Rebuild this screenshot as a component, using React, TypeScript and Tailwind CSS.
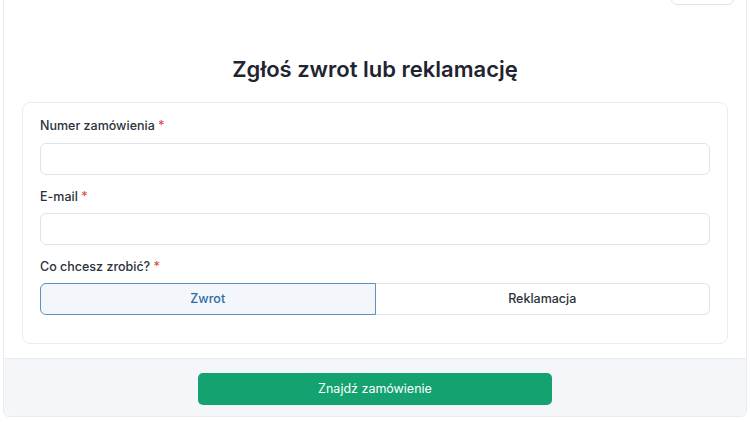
import React from "react";

export default function App() {
  const font = { fontFamily: "Inter, 'Noto Sans', sans-serif" };
  return (
    <div className="w-[750px] h-[422px] overflow-hidden bg-white" style={font}>
      <div className="ml-[3px] mr-[3px] -mt-[40px] border border-[#e8ebef] rounded-md bg-white overflow-hidden">
        <div className="flex justify-end pr-[12px] pt-[10px]">
          <div className="w-[63px] h-[34px] border border-[#dfe3e8] rounded-md bg-white" />
        </div>
        <h1 className="mt-[49px] text-center text-[22px] leading-[30px] font-semibold text-[#1f2430]">
          Zgłoś zwrot lub reklamację
        </h1>
        <div className="px-[18px] pt-[18px] pb-[14px]">
          <div className="border border-[#e9ecf0] rounded-lg px-[17px] pt-[13px] pb-[28px]">
            <label className="block text-[12.5px] leading-[20px] font-medium text-[#2b313b]">
              Numer zamówienia <span className="text-[#e5484d]">*</span>
            </label>
            <div className="mt-[7px] h-[32px] border border-[#dfe3e8] rounded-md bg-white" />
            <label className="block mt-[12px] text-[12.5px] leading-[20px] font-medium text-[#2b313b]">
              E-mail <span className="text-[#e5484d]">*</span>
            </label>
            <div className="mt-[6px] h-[32px] border border-[#dfe3e8] rounded-md bg-white" />
            <label className="block mt-[12px] text-[12.5px] leading-[20px] font-medium text-[#2b313b]">
              Co chcesz zrobić? <span className="text-[#e5484d]">*</span>
            </label>
            <div className="mt-[6px] h-[32px] flex">
              <div className="flex-1 flex items-center justify-center border border-[#5d8fc2] rounded-l-md bg-[#f3f7fc] text-[12.5px] font-medium text-[#2f6aa6]">
                Zwrot
              </div>
              <div className="flex-1 flex items-center justify-center border border-l-0 border-[#dfe3e8] rounded-r-md bg-white text-[12.5px] font-medium text-[#2b313b]">
                Reklamacja
              </div>
            </div>
          </div>
        </div>
        <div className="border-t border-[#e8ebef] bg-[#f4f6f9] pt-[14px] pb-[11px] flex justify-center">
          <button className="w-[354px] h-[32px] rounded-[5px] bg-[#14a271] text-white text-[12.5px] font-normal">
            Znajdź zamówienie
          </button>
        </div>
      </div>
    </div>
  );
}
